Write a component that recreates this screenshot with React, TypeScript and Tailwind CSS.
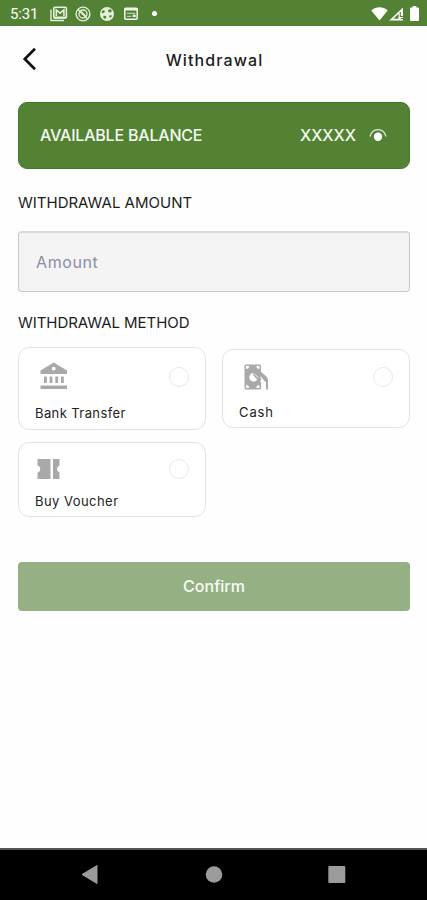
import type { ReactNode } from 'react'

function StatusBar() {
  return (
    <div className="flex h-[26px] shrink-0 items-center justify-between bg-[#538234] pt-px text-white">
      <div className="flex items-center pl-[10px]">
        <span className="w-10 pt-[2px] font-['Roboto',sans-serif] text-[15px] leading-none tracking-[-0.2px]">
          5:31
        </span>
        <svg width="18" height="16" viewBox="0 0 18 16" fill="none" stroke="#e4efdc">
          <path d="M1 3.5v11h13" strokeWidth="1.4" />
          <rect x="3.8" y="1.2" width="12.6" height="10.8" rx="1" strokeWidth="1.6" />
          <path d="M6.3 10V4l3.8 3.2L13.9 4v6" strokeWidth="1.6" />
          <path d="M4 11.5h12" strokeWidth="2" />
        </svg>
        <svg className="ml-[7px]" width="16" height="16" viewBox="0 0 16 16" fill="none" stroke="#e4efdc">
          <circle cx="8" cy="8" r="6.9" strokeWidth="1.4" />
          <circle cx="8" cy="8" r="4" strokeWidth="1.3" />
          <path d="M3 3.5l9.5 9.5M6 5.5l4.5 4.5" strokeWidth="1.4" />
        </svg>
        <svg className="ml-2" width="16" height="16" viewBox="0 0 16 16">
          <circle cx="8" cy="8" r="7" fill="#e4efdc" />
          <path
            d="M9 4l2.5-1 1.5 2-1.5 1.5L9.5 6zM3 5l2-1 1 1.8-1.6 1.4-1.7-.4zM4.500 9.800l2.500.2.300 2-1.500.8-1.600-1.300zM10.500 9.500l1.800-.5.500 1.400-1.600 1.400-1-.7z"
            fill="#538234"
          />
        </svg>
        <svg className="ml-2" width="16" height="16" viewBox="0 0 16 16">
          <rect x="1.8" y="2.3" width="12.4" height="11" rx="1" fill="none" stroke="#f2f7ee" strokeWidth="1.5" />
          <path d="M1.5 3.3h13" stroke="#f2f7ee" strokeWidth="2.4" />
          <path d="M3.8 7.300h8.400M3.800 10.300h4.700" stroke="#f2f7ee" strokeWidth="0.8" />
          <path d="M9.800 9.8h2.900" stroke="#f2f7ee" strokeWidth="2.4" />
        </svg>
        <span className="ml-[13px] size-[5px] rounded-full bg-white" />
      </div>
      <div className="flex items-center pr-[8px]">
        <svg width="17" height="14" viewBox="0 0 17 14" fill="#fff">
          <path d="M.3 3.5C5-.8 12-.8 16.7 3.5L8.5 13.5z" />
        </svg>
        <svg className="ml-[1px]" width="15" height="14" viewBox="0 0 15 14">
          <path d="M.2 13.6L14 .4v13.2z" fill="#fff" />
          <path d="M4.5 11.8L9.5 6.8v5z" fill="#538234" />
          <path d="M11.3 5v4.5h3M11.8 11.5h2.5" fill="none" stroke="#538234" strokeWidth="1.1" />
        </svg>
        <svg className="ml-[6px]" width="9" height="15" viewBox="0 0 9 15" fill="#fff">
          <path d="M2.7 0h3.6v1.5H8q1 0 1 1V14q0 1-1 1H1q-1 0-1-1V2.5q0-1 1-1h1.7z" />
        </svg>
      </div>
    </div>
  )
}

function BankIcon() {
  return (
    <svg width="28" height="28" viewBox="0 0 28 28" fill="#a9a9a9">
      <path
        fillRule="evenodd"
        d="M13.7.5L27 8.5V12H.5V8.500zM13.700 4.700a1.900 1.900 0 1 0 0 3.800 1.900 1.900 0 0 0 0-3.800z"
      />
      <path d="M4 14.500h2.800v6.500H4zM9.600 14.500h2.800v6.500H9.600zM15.300 14.500h2.800v6.500h-2.800zM21 14.500h2.800v6.500H21zM.5 23.500H27V27H.5z" />
    </svg>
  )
}

function CashIcon() {
  return (
    <svg width="25" height="26" viewBox="0 0 25 26">
      <rect x=".5" y=".5" width="16.5" height="25" rx="1.5" fill="#a9a9a9" />
      <path
        d="M2 2h3.200Q5 4.800 2 5zM15.500 2h-3.200Q12.500 4.800 15.500 5zM2 24h3.200Q5 21.200 2 21zM15.500 24h-3.200Q12.500 21.200 15.500 21z"
        fill="#fff"
      />
      <path d="M9.500 9a4.300 4.300 0 1 0 3.800 6.500L9.500 11.500z" fill="#fff" />
      <path d="M17 17.500v8.500h5V18l-2.500-3z" fill="#fff" />
      <path
        d="M15 5.500l2.500 2.800 4.800 4.200q1.700 1.800 1.700 4.500v8.500h-2V18q-2.500-1.500-3.500-3.500l-1.500-1.500q1.200 3.500-.5 4.500-1 .5-2.500-1.300L9.500 11l1.500-1 3.500 3.500z"
        fill="#a9a9a9"
      />
      <path d="M10.800 10l3.700 4M16.800 12.500q1.500 3.300-.3 5.300" fill="none" stroke="#fff" strokeWidth="0.8" />
    </svg>
  )
}

function VoucherIcon() {
  return (
    <svg width="23" height="20" viewBox="0 0 23 20" fill="#a9a9a9">
      <path d="M.5 0h13v20H.5v-6.500a3.600 3.600 0 0 0 0-7z" />
      <path d="M16 0h6.500v6.500a3.700 3.700 0 0 0 0 7V20H16z" />
    </svg>
  )
}

interface MethodProps {
  icon: ReactNode
  label: string
  className: string
  iconClass: string
  labelClass: string
  radioClass: string
}

function Method({ icon, label, className, iconClass, labelClass, radioClass }: MethodProps) {
  return (
    <button
      type="button"
      className={`flex w-[188px] flex-col rounded-[11px] border border-[#e3e3e3] bg-white px-4 text-left ${className}`}
    >
      <span className="flex w-full items-start justify-between">
        <span className={iconClass}>{icon}</span>
        <span className={`size-5 rounded-full border border-[#e8e8e8] ${radioClass}`} />
      </span>
      <span className={`text-[13px] leading-4 whitespace-nowrap text-[#222] ${labelClass}`}>
        {label}
      </span>
    </button>
  )
}

export default function App() {
  return (
    <div className="flex h-[900px] w-[427px] flex-col overflow-hidden bg-[#fefefe] font-['Inter',sans-serif] text-[#1c1c1c]">
      <StatusBar />

      <header className="grid h-[76px] shrink-0 grid-cols-[48px_1fr_48px] items-start">
        <button type="button" className="pt-[21px] pl-[22px]">
          <svg width="16" height="24" viewBox="0 0 16 24" fill="none" stroke="#111" strokeWidth="2.7">
            <path d="M13 1.8L2.8 12 13 22.2" />
          </svg>
        </button>
        <h1 className="pt-[22px] pl-[2px] text-center text-[16px] leading-6 font-medium tracking-[1.1px]">
          Withdrawal
        </h1>
      </header>

      <main className="flex flex-1 flex-col pr-[17px] pl-[18px]">
        <section className="flex h-[67px] items-center justify-between rounded-[9px] border border-[#46792a] bg-[#538234] pr-[22px] pb-[2px] pl-[21px] text-[16px] font-medium text-[#f4faef]">
          <span className="tracking-[-0.2px]">AVAILABLE BALANCE</span>
          <span className="flex items-center gap-[13px]">
            <span>XXXXX</span>
            <svg width="18" height="14" viewBox="0 0 18 14">
              <path d="M1 8.5C3.5-.8 14.5-.8 17 8.5" fill="none" stroke="#dfead6" strokeWidth="1.3" />
              <circle cx="9" cy="8.7" r="4.2" fill="#fff" />
            </svg>
          </span>
        </section>

        <h2 className="mt-[22px] text-[15px] leading-6">WITHDRAWAL AMOUNT</h2>
        <input
          type="text"
          placeholder="Amount"
          className="mt-4 h-[61px] rounded-[4px] border border-t-2 border-[#c8c8c8] border-t-[#dadada] bg-[#f4f4f4] px-[17px] text-[16px] tracking-[0.6px] outline-none placeholder:text-[#8a8ea6]"
        />

        <h2 className="mt-[19px] text-[15px] leading-6 tracking-[-0.05px]">WITHDRAWAL METHOD</h2>
        <div className="mt-[12px] flex flex-wrap items-center gap-x-4 gap-y-3">
          <Method
            icon={<BankIcon />}
            label="Bank Transfer"
            className="h-[83px]"
            iconClass="mt-[14px] ml-[5px]"
            labelClass="mt-[15px] tracking-[0.4px]"
            radioClass="mt-[19px]"
          />
          <Method
            icon={<CashIcon />}
            label="Cash"
            className="h-[79px]"
            iconClass="mt-[14px] ml-[5px]"
            labelClass="mt-[14px] tracking-[0.9px]"
            radioClass="mt-[17px]"
          />
          <Method
            icon={<VoucherIcon />}
            label="Buy Voucher"
            className="h-[75px]"
            iconClass="mt-[16px] ml-[2px]"
            labelClass="mt-[14px] tracking-[0.45px]"
            radioClass="mt-[16px]"
          />
        </div>

        <button
          type="button"
          className="mt-[45px] h-[49px] rounded-[4px] bg-[#95b184] pb-[2px] text-[16px] font-medium text-[#f7fbf4]"
        >
          Confirm
        </button>
      </main>

      <nav className="flex h-[52px] shrink-0 items-center border-t-2 border-[#555] bg-black">
        <svg width="427" height="50" viewBox="0 0 427 50" fill="#9b9b9b">
          <path d="M82 24.5L97 15.5v18z" stroke="#9b9b9b" strokeLinejoin="round" />
          <circle cx="214" cy="24.5" r="8.3" />
          <rect x="328.3" y="16" width="17" height="17" rx="1" />
        </svg>
      </nav>
    </div>
  )
}
